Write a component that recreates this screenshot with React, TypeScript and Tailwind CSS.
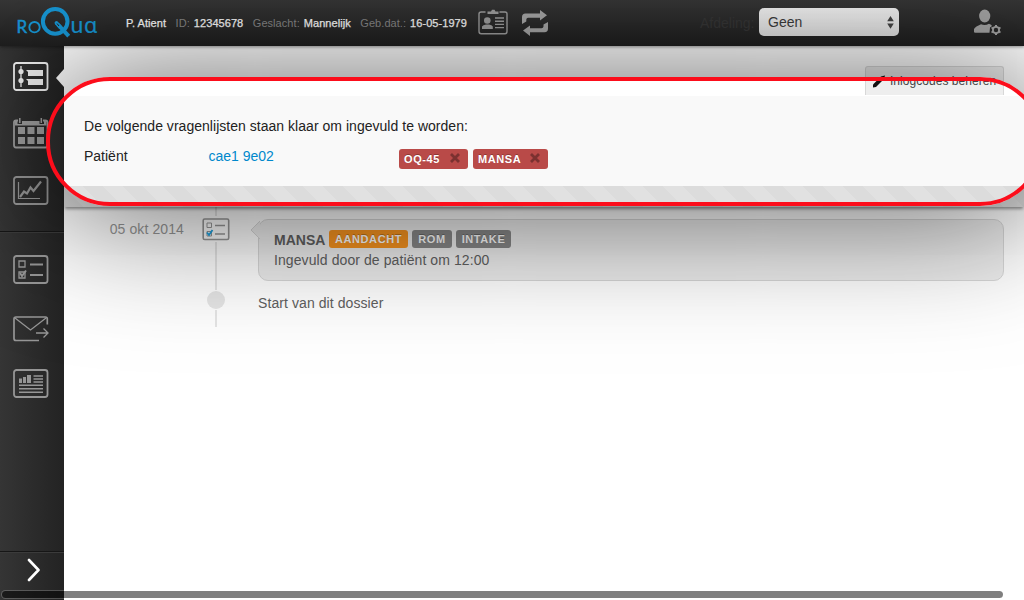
import type { ReactNode } from "react";

function Logo() {
  return (
    <svg width="84" height="34" viewBox="0 0 84 34" className="ml-4 shrink-0" fill="none" stroke="#1795d2">
      <text x="0.400" y="27" fontFamily="Lato, sans-serif" fontSize="17" fill="#1795d2" strokeWidth="0.5">R</text>
      <circle cx="18.500" cy="21.2" r="5.200" strokeWidth="1.900" />
      <circle cx="39.2" cy="15.400" r="12.300" strokeWidth="4" />
      <path d="M42 18.500 52.700 30.200" strokeWidth="4" />
      <path d="M40.500 17 44 21" strokeWidth="3.800" strokeLinecap="round" />
      <path d="M41 17.500 43 20" stroke="#222" strokeWidth="1" />
      <text x="54.500" y="27" fontFamily="Lato, sans-serif" fontSize="23" fill="#1795d2" strokeWidth="0.2">u</text>
      <text x="68" y="27" fontFamily="'Noto Sans', sans-serif" fontSize="21.500" fill="#1795d2" strokeWidth="0.2">ɑ</text>
    </svg>
  );
}

function Field({ label, value }: { label?: string; value: string }) {
  return (
    <span className="mr-[9.500px] whitespace-nowrap">
      {label && <span className="mr-1 text-[#858585]">{label}</span>}
      <span className="text-[#f8f8f8] [-webkit-text-stroke:0.25px_#f8f8f8]">{value}</span>
    </span>
  );
}

function Header() {
  return (
    <header className="relative z-10 flex h-[46px] items-center bg-linear-to-b from-[#363636] to-[#1f1f1f] text-[11px] shadow-[0_1px_3px_rgba(0,0,0,0.4)]">
      <Logo />
      <div className="ml-[26px] flex w-[352px] pt-px tracking-[0.06px]">
        <Field value="P. Atient" />
        <Field label="ID:" value="12345678" />
        <Field label="Geslacht:" value="Mannelijk" />
        <Field label="Geb.dat.:" value="16-05-1979" />
      </div>
      <svg width="30" height="26" viewBox="0 0 30 26" className="-mt-0.5" fill="none" stroke="#9c9c9c" strokeWidth="1.4">
        <path d="M7.5 3H3.2Q1 3 1 5v17.2Q1 24.7 3.2 24.7H27Q29 24.7 29 22.2V5Q29 3 27 3H21.500" />
        <path d="M9.500 5V2.500H13L14 .8H16.500L17.500 2.500H20.500V5Z" fill="#9c9c9c" stroke="none" />
        <circle cx="9.300" cy="11.500" r="3.300" fill="#9c9c9c" stroke="none" />
        <path d="M4 20V17.500Q5 15.800 8 15.500H11Q14 15.800 14.800 17.500V20Z" fill="#9c9c9c" stroke="none" />
        <path d="M17 9H26M17 12.200H26M17 15.400H26M17 18.600H26" />
      </svg>
      <svg width="26" height="26" viewBox="0 0 26 26" className="ml-[14px]" fill="#a4a4a4">
        <path d="M0 14V7Q0 3.500 3.500 3.500H18V0L25 5.300L18 10.500V7.700H6Q4.500 7.700 4.300 9.500V11.500Z" />
        <path d="M26 12V18.500Q26 22.300 22.500 22.300H8V26L1 20.500L8 15.500V18.300H19.500Q21.300 18.300 21.500 16.500V14.500Z" />
      </svg>
      <span className="ml-[152px] w-[59px] text-sm text-[#363636]">Afdeling:</span>
      <div className="-mt-0.5 flex h-7 w-[140px] items-center justify-between rounded-[5px] bg-linear-to-b from-[#f0f0f0] to-[#e2e2e2] pr-[5px] pl-[9px] text-sm text-[#3c3c3c]">
        <span>Geen</span>
        <svg width="7" height="13" viewBox="0 0 7 13" fill="#444">
          <path d="M.2 5.200 3.500 0 6.800 5.200ZM.2 7.500 3.500 12.700 6.800 7.500Z" />
        </svg>
      </div>
      <svg width="28" height="28" viewBox="0 0 28 28" className="-mt-px ml-[75px]" fill="#a0a0a0">
        <ellipse cx="10.700" cy="7" rx="5.600" ry="6.500" />
        <path d="M0 23V20Q1.500 17.500 7 15.200Q11 17 15 14.700Q17.500 15.500 18 17L16 18.500L15.500 23.800H2Q0 24 0 23Z" />
        <circle cx="22" cy="21" r="3.100" fill="none" stroke="#a0a0a0" strokeWidth="1.800" />
        <path d="M22 16V18M22 24V26M17.500 18.500 19.300 19.500M24.700 22.500 26.500 23.500M17.500 23.500 19.300 22.500M24.700 19.500 26.500 18.500" stroke="#a0a0a0" strokeWidth="2" />
      </svg>
    </header>
  );
}

function NavIcon({ children, className = "", color = "#969696", h = 29 }: { children: ReactNode; className?: string; color?: string; h?: number }) {
  return (
    <svg width="36" height={h} viewBox={`0 0 36 ${h}`} className={`ml-[13px] shrink-0 ${className}`} fill="none" stroke={color} strokeWidth="1.8">
      {children}
    </svg>
  );
}

function Frame() {
  return <rect x="1" y="1" width="33.500" height="27" rx="2.500" />;
}

function Sidebar() {
  return (
    <aside className="relative flex w-16 shrink-0 flex-col bg-linear-to-r from-[#353535] to-[#232323]">
      <svg width="8" height="18" viewBox="0 0 8 18" className="absolute top-[23px] right-0">
        <path d="M8 0V18L0 9Z" fill="#fff" />
      </svg>
      <NavIcon className="mt-4" color="#f0f0f0">
        <Frame />
        <path d="M8 4V25" strokeWidth="1.300" />
        <circle cx="8" cy="9.500" r="2.600" fill="#f0f0f0" stroke="none" />
        <circle cx="8" cy="18.500" r="2.600" fill="#f0f0f0" stroke="none" />
        <path d="M13 8H30V14H15V10ZM13 17H30V23H15V19Z" fill="#f0f0f0" stroke="none" />
      </NavIcon>
      <NavIcon className="mt-[27px]" color="#a0a0a0" h={31}>
        <path d="M5 2.500H3Q1 2.500 1 4.500V27Q1 29.500 3 29.500H32.500Q34.500 29.500 34.500 27V4.500Q34.500 2.500 32.500 2.500H30" />
        <path d="M2 6V3H4.500V6H9V3H26.500V6H31V3H33.500V7.500H2Z" fill="#a0a0a0" stroke="none" />
        <path d="M6.800 0V5M28.300 0V5" strokeWidth="1.500" />
        <path d="M5 9H12V16H5ZM14.500 9H21.500V16H14.500ZM24 9H31V16H24ZM5 19H12V26H5ZM14.500 19H21.500V26H14.500ZM24 19H31V26H24Z" fill="#a0a0a0" stroke="none" />
      </NavIcon>
      <NavIcon className="mt-[27px]">
        <Frame />
        <path d="M5.500 6V22.500H27" strokeWidth="1.200" />
        <path d="M7 21 11 15.500 14 17.500 17.500 11.500 20.500 15 28 5.500" strokeWidth="2.200" />
      </NavIcon>
      <div className="mt-[26px] border-t border-[#161616]">
        <div className="h-px bg-[#3b3b3b]" />
      </div>
      <NavIcon className="mt-[22px]">
        <Frame />
        <path d="M6 6H12V12H6ZM6 17H12V23H6Z" strokeWidth="1.300" />
        <path d="M7 18 9 21 13 15.500" strokeWidth="2" />
        <path d="M17 9.500H30M17 20H30" />
      </NavIcon>
      <NavIcon className="mt-[31px]" h={27}>
        <path d="M26 25.500H3Q1 25.500 1 23.500V4Q1 2 3 2H32.500Q34.300 2 34.300 4V9.500" strokeWidth="1.700" />
        <path d="M2 3 17.500 15 33 3M23 18H35M30.500 13.500 35 18 30.500 22.500" strokeWidth="1.300" />
      </NavIcon>
      <NavIcon className="mt-[27px]">
        <Frame />
        <path d="M6 9.500H9V14H6ZM10 8H13V14H10ZM14 6H18V14H14Z" fill="#969696" stroke="none" />
        <path d="M20.500 7H30M20.500 10H30M20.500 13H30M6 16.300H30M6 19.800H30M6 23.300H30" strokeWidth="1.500" />
      </NavIcon>
      <div className="mt-auto flex h-[49px] flex-col border-t border-[#161616]">
        <div className="h-px bg-[#3b3b3b]" />
        <svg width="14" height="24" viewBox="0 0 14 24" className="mt-[5px] ml-[26px]" fill="none" stroke="#fff" strokeWidth="2.600" strokeLinecap="round" strokeLinejoin="round">
          <path d="M3 2 12.500 12 3 22" />
        </svg>
      </div>
    </aside>
  );
}

function QuestionnaireTag({ name, width }: { name: string; width: string }) {
  return (
    <span className={`flex h-5 items-center justify-between rounded-[3px] bg-[#b94a48] pr-[8px] pl-[5px] text-[11px] font-bold tracking-[0.6px] text-white [text-shadow:0_-1px_0_rgba(0,0,0,0.25)] ${width}`}>
      {name}
      <svg width="10" height="10" viewBox="0 0 10 10" className="-mt-0.5" stroke="#7b3130" strokeWidth="2.800">
        <path d="M1 1 9 9M9 1 1 9" />
      </svg>
    </span>
  );
}

function Label({ text, className }: { text: string; className: string }) {
  return (
    <span className={`flex h-[18px] items-center justify-center rounded-[3px] text-[11px] font-bold tracking-[0.6px] text-white [text-shadow:0_-1px_0_rgba(0,0,0,0.25)] ${className}`}>
      {text}
    </span>
  );
}

function OpenQuestionnaires() {
  return (
    <section className="relative h-[111px] bg-[#f9f9f9] text-[#222] shadow-[0_3px_3px_-1px_rgba(0,0,0,0.4)]">
      <div className="h-[90px] px-5 pt-5">
        <p className="leading-5 tracking-[0.03px]">De volgende vragenlijsten staan klaar om ingevuld te worden:</p>
        <div className="mt-[10px] flex leading-5">
          <span className="w-[124.500px]">Patiënt</span>
          <a className="w-[190.500px] text-[#0088cc]">cae1 9e02</a>
          <div className="mt-[3px] flex gap-[5px]">
            <QuestionnaireTag name="OQ-45" width="w-[69px]" />
            <QuestionnaireTag name="MANSA" width="w-[75px]" />
          </div>
        </div>
      </div>
      <div className="h-[21px] bg-[#e1e1e1] bg-[repeating-linear-gradient(45deg,#dcdcdc_0_14.142px,#e1e1e1_14.142px_28.284px)]" />
    </section>
  );
}

function Timeline() {
  return (
    <section className="text-[#606060]">
      <div className="flex h-[83px]">
        <span className="w-[120px] pt-3 text-right leading-5 tracking-[0.1px] text-[#999]">05 okt 2014</span>
        <div className="ml-[18px] flex w-[28px] flex-col items-center">
          <div className="h-[9px] w-0.5 bg-[#e6e6e6]" />
          <svg width="28" height="26" viewBox="0 0 28 26" fill="none" stroke="#999" strokeWidth="1.600">
            <rect x="1.200" y="3" width="25.500" height="20.500" rx="1.500" />
            <path d="M5 7H9.500V11.500H5ZM5 15.500H9.500V20H5Z" strokeWidth="1" />
            <path d="M13 9.500H23M13 18H23" strokeWidth="1.300" />
            <path d="M5 16.500 7 19 10.500 14" stroke="#1da4e4" strokeWidth="1.800" />
          </svg>
          <div className="w-0.5 grow bg-[#e6e6e6]" />
        </div>
        <article className="relative mt-3 ml-7 h-[62px] w-[746px] rounded-[10px] border border-[#d8d8d8] bg-[#eee] pt-[10px] pl-[15px]">
          <svg width="10" height="20" viewBox="0 0 10 20" className="absolute top-[1px] -left-[9px]">
            <path d="M10 0 1 9 10 18" fill="#eee" stroke="#d8d8d8" />
          </svg>
          <div className="flex items-center leading-5">
            <b className="mr-1 w-[51px]">MANSA</b>
            <div className="-mt-0.5 flex gap-1">
              <Label text="AANDACHT" className="w-[79px] bg-[#f89420]" />
              <Label text="ROM" className="w-10 bg-[#888]" />
              <Label text="INTAKE" className="w-[55px] bg-[#888]" />
            </div>
          </div>
          <p className="leading-5 tracking-[0.09px]">Ingevuld door de patiënt om 12:00</p>
        </article>
      </div>
      <div className="flex h-[37px]">
        <div className="ml-[143px] flex w-[18px] flex-col items-center">
          <div className="mt-px size-[18px] rounded-full bg-[#e6e6e6]" />
          <div className="mt-px h-[17px] w-0.5 bg-[#e6e6e6]" />
        </div>
        <span className="ml-[33px] pt-[3px] leading-5 tracking-[0.08px]">Start van dit dossier</span>
      </div>
    </section>
  );
}

export default function App() {
  return (
    <div className="relative flex h-[600px] w-[1024px] flex-col overflow-hidden bg-white font-['Liberation_Sans',Arial,sans-serif] text-sm">
      <Header />
      <div className="flex min-h-0 grow">
        <Sidebar />
        <main className="grow">
          <div className="flex h-[50px] justify-end pt-5 pr-5">
            <button className="flex h-[29px] w-[139px] rounded-t-[3px] border border-b-0 border-[#d8d8d8] bg-[#eee] pt-[5px] pl-[7px] text-[12px] leading-[18px] text-[#444]">
              <svg width="12" height="14" viewBox="0 0 12 14" className="mt-[2px] mr-[5px]" fill="#111">
                <path d="M0 13.500 0 10.500 8 2.500 12 1.500 11 5 3 13Z" />
              </svg>
              <span className="whitespace-nowrap tracking-[0.04px]">Inlogcodes beheren</span>
            </button>
          </div>
          <OpenQuestionnaires />
          <Timeline />
        </main>
      </div>
      <div className="absolute top-[77px] left-[46px] z-20 h-[129px] w-[998px] rounded-[64px] border-4 border-[#fc0d1b] shadow-[0_6px_130px_6px_rgba(0,0,0,0.6)]" />
      <div className="absolute top-[590px] left-px z-30 h-[9px] w-[1003px] rounded-full border border-white/20 bg-black/50 bg-clip-padding" />
    </div>
  );
}
